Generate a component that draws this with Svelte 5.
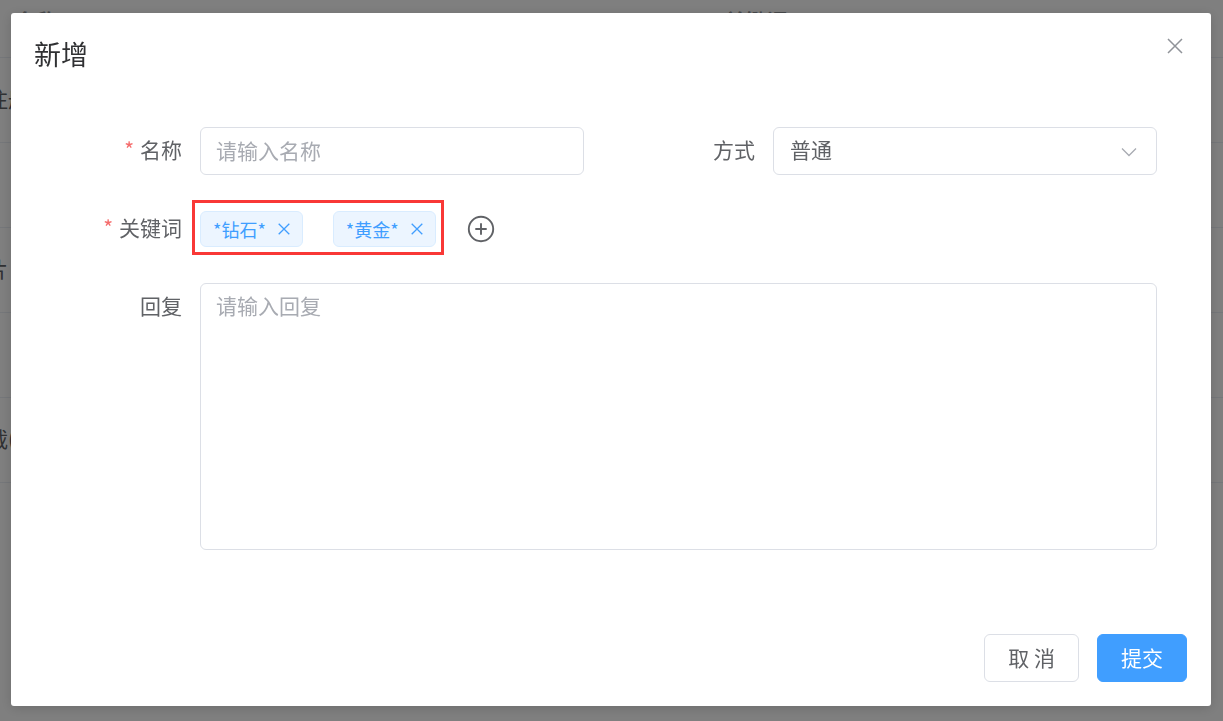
<script>
  const rows = ['关注册', '', '图片', '', '下载('];
  let tags = $state(['*钻石*', '*黄金*']);
  let name = $state('');
  let mode = $state('普通');
  let reply = $state('');

  function removeTag(index) {
    tags.splice(index, 1);
  }
</script>

<div class="page">
  <table class="list">
    <thead>
      <tr><th>名称</th><th>关键词</th></tr>
    </thead>
    <tbody>
      {#each rows as row}
        <tr><td>{row}</td><td></td></tr>
      {/each}
    </tbody>
  </table>

  <div class="overlay">
    <div class="dialog" role="dialog" aria-modal="true" aria-labelledby="dialog-title">
      <header>
        <h1 id="dialog-title">新增</h1>
        <button class="close" type="button" aria-label="关闭">
          <svg width="18" height="18" viewBox="0 0 18 18"><path d="M2 2l14 14M16 2L2 16" /></svg>
        </button>
      </header>

      <form id="reply-form">
        <label class="required" for="name">名称</label>
        <input id="name" type="text" placeholder="请输入名称" bind:value={name} />

        <label for="mode">方式</label>
        <div class="select">
          <select id="mode" bind:value={mode}>
            <option>普通</option>
          </select>
          <svg width="18" height="12" viewBox="0 0 18 12"><path d="M2 2.5l7 7 7-7" /></svg>
        </div>

        <span class="label required" id="keywords-label">关键词</span>
        <div class="keywords wide" role="group" aria-labelledby="keywords-label">
          <div class="tags">
            {#each tags as tag, i}
              <span class="tag">
                {tag}
                <button type="button" aria-label="删除" onclick={() => removeTag(i)}>
                  <svg width="14" height="14" viewBox="0 0 14 14"><path d="M1.7 1.7l10.6 10.6M12.3 1.7L1.7 12.3" /></svg>
                </button>
              </span>
            {/each}
          </div>
          <button class="add" type="button" aria-label="添加">
            <svg width="28" height="28" viewBox="0 0 28 28">
              <circle cx="14" cy="14" r="12.2" />
              <path d="M14 8.3v11.4M8.3 14h11.4" />
            </svg>
          </button>
        </div>

        <label for="reply">回复</label>
        <textarea class="wide" id="reply" rows="8" placeholder="请输入回复" bind:value={reply}></textarea>
      </form>

      <footer>
        <button class="btn" type="button">取 消</button>
        <button class="btn primary" type="submit" form="reply-form">提交</button>
      </footer>
    </div>
  </div>
</div>

<style>
  :global(body) {
    margin: 0;
    background: #fff;
  }

  .page {
    min-height: 100vh;
    overflow: hidden;
    color: #606266;
    font-family: 'Noto Sans CJK SC', sans-serif;
    font-size: 21px;
    font-weight: 400;
    line-height: 32px;
  }

  * {
    box-sizing: border-box;
  }

  .list {
    width: calc(100% + 34px);
    margin-left: -34px;
    border-collapse: collapse;
    table-layout: fixed;
  }

  th,
  td {
    height: 85px;
    padding: 0 0 4px;
    border-bottom: 1px solid #ebeef5;
    text-align: left;
    white-space: nowrap;
  }

  th {
    height: 57px;
    padding: 4px 0 20px 50px;
    color: #909399;
    font-weight: 700;
  }

  th + th {
    padding-left: 130px;
  }

  .overlay {
    position: fixed;
    inset: 0;
    padding: 13px 12px 15px 11px;
    overflow: auto;
    background: rgba(0, 0, 0, 0.5);
  }

  .dialog {
    display: flex;
    flex-direction: column;
    min-height: 100%;
    background: #fff;
    border-radius: 3px;
    box-shadow: 0 2px 12px rgba(0, 0, 0, 0.15);
  }

  header {
    display: flex;
    align-items: flex-start;
    justify-content: space-between;
    padding: 24px 26px 56px 23px;
  }

  h1 {
    margin: 0;
    color: #303133;
    font-size: 27px;
    font-weight: 400;
    line-height: 34px;
  }

  button {
    display: flex;
    align-items: center;
    justify-content: center;
    padding: 0;
    border: 0;
    background: none;
    color: inherit;
    font: inherit;
    cursor: pointer;
  }

  svg {
    display: block;
    fill: none;
    stroke: currentColor;
  }

  .close {
    width: 20px;
    height: 18px;
    color: #909399;
  }

  .close svg {
    stroke-width: 1.5;
  }

  form {
    display: grid;
    grid-template-columns: 171px 1fr 153px 1fr;
    gap: 30px 18px;
    padding-right: 54px;
  }

  label,
  .label {
    line-height: 44px;
    text-align: right;
    white-space: nowrap;
  }

  .required::before {
    content: '*';
    margin-right: 6px;
    color: #f56c6c;
  }

  .wide {
    grid-column: 2 / -1;
  }

  input,
  select,
  textarea {
    display: block;
    width: 100%;
    min-width: 0;
    height: 48px;
    margin: 0;
    padding: 0 15px 2px;
    border: 1px solid #dcdfe6;
    border-radius: 6px;
    outline: 0;
    background: #fff;
    color: #606266;
    font: inherit;
    appearance: none;
  }

  textarea {
    height: 267px;
    padding: 5px 15px;
    resize: none;
  }

  ::placeholder {
    color: #a8abb2;
    opacity: 1;
  }

  .select {
    position: relative;
  }

  select {
    padding: 0 48px 4px 16px;
  }

  .select svg {
    position: absolute;
    top: 19px;
    right: 19px;
    color: #a8abb2;
    stroke-width: 1.3;
    pointer-events: none;
  }

  .keywords {
    display: flex;
    align-items: center;
    gap: 31px;
    height: 48px;
  }

  .tags {
    position: relative;
    display: flex;
    gap: 30px;
  }

  .tags::before {
    content: '';
    position: absolute;
    inset: -11px -8px -8px;
    border: 3px solid #f93836;
    pointer-events: none;
  }

  .tag {
    display: flex;
    align-items: center;
    gap: 11px;
    height: 36px;
    padding: 0 11px 0 12px;
    border: 1px solid #d9ecff;
    border-radius: 6px;
    background: #ecf5ff;
    color: #409eff;
    font-size: 18px;
    line-height: 32px;
    white-space: nowrap;
  }

  .tag svg {
    stroke-width: 1.3;
  }

  .add svg {
    stroke-width: 1.9;
  }

  footer {
    display: flex;
    justify-content: flex-end;
    gap: 18px;
    margin-top: auto;
    padding: 24px;
  }

  .btn {
    height: 48px;
    padding: 0 23px 2px;
    border: 1px solid #dcdfe6;
    border-radius: 6px;
    background: #fff;
  }

  .primary {
    border-color: #409eff;
    background: #409eff;
    color: #fff;
  }
</style>
